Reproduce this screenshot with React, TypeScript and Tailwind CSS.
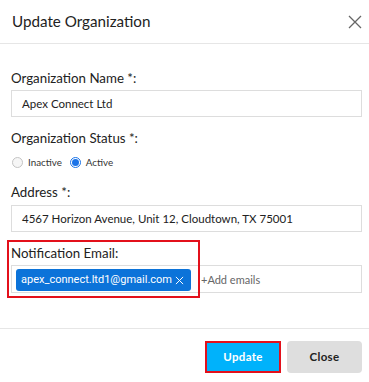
import React, { useState } from "react";

const lato = { fontFamily: "Lato, 'Open Sans', sans-serif" };

function Radio({ checked, label }: { checked: boolean; label: string }) {
  return (
    <label className="flex items-center gap-[5px] text-[9.8px] text-[#333]">
      {checked ? (
        <span className="w-[11px] h-[11px] rounded-full border border-[#1a73e8] bg-white flex items-center justify-center">
          <span className="w-[7px] h-[7px] rounded-full bg-[#1a73e8]" />
        </span>
      ) : (
        <span className="w-[11px] h-[11px] rounded-full border border-[#c4c4c4] bg-[#f6f6f6]" />
      )}
      {label}
    </label>
  );
}

export default function App() {
  const [status, setStatus] = useState("active");

  return (
    <div className="w-[369px] h-[382px] bg-white text-[#222] overflow-hidden" style={lato}>
      <div className="h-[44px] border-b border-[#e6e6e6] flex items-center justify-between pl-[12px] pr-[7px]">
        <h2 className="text-[15.2px] leading-none mt-[1px]">Update Organization</h2>
        <button className="w-[14px] h-[14px] text-[#666] mt-[1px]">
          <svg viewBox="0 0 14 14" width="14" height="14" stroke="currentColor" strokeWidth="1.3" fill="none">
            <path d="M1 1L13 13M13 1L1 13" />
          </svg>
        </button>
      </div>

      <div className="pl-[11px] pr-[7px] pt-[26px] flex flex-col">
        <div className="text-[13.3px] leading-[16px]">Organization Name *:</div>
        <div className="mt-[4px] h-[27px] border border-[#ddd] flex items-center pl-[10px] text-[11.5px]">
          Apex Connect Ltd
        </div>

        <div className="mt-[13px] text-[13.3px] leading-[16px]">Organization Status *:</div>
        <div className="mt-[8px] flex items-center gap-[8px] h-[16px] pl-[1px]" onClick={() => setStatus(status)}>
          <Radio checked={status === "inactive"} label="Inactive" />
          <Radio checked={status === "active"} label="Active" />
        </div>

        <div className="mt-[14px] text-[13.3px] leading-[16px]">Address *:</div>
        <div className="mt-[5px] h-[27px] border border-[#ddd] flex items-center pl-[10px] text-[11.5px]">
          4567 Horizon Avenue, Unit 12, Cloudtown, TX 75001
        </div>

        <div className="relative mt-[8px]">
          <div className="absolute left-[-4px] top-0 w-[193px] h-[58px] border-2 border-[#e3101b] pointer-events-none z-10" />
          <div className="pt-[5px] text-[13.3px] leading-[16px]">Notification Email:</div>
          <div className="mt-[4px] h-[28px] border border-[#ddd] flex items-start pt-[3px] pl-[4px] gap-[10px]">
            <span
              className="h-[22px] w-[175px] rounded-[3px] bg-[#0c73d9] text-white flex items-center justify-between pl-[5px] pr-[7px] text-[11px]"
              style={{ fontFamily: "Roboto, Arial, sans-serif" }}
            >
              apex_connect.ltd1@gmail.com
              <svg viewBox="0 0 10 10" width="9" height="9" stroke="white" strokeWidth="1.1" fill="none">
                <path d="M1 1L9 9M9 1L1 9" />
              </svg>
            </span>
            <span className="text-[11px] leading-[22px] text-[#666]">+Add emails</span>
          </div>
        </div>
      </div>

      <div className="mt-[35px] border-t border-[#e6e6e6] pt-[12px] pr-[7px] flex justify-end gap-[6px]">
        <button className="w-[76px] h-[32px] bg-[#00b2fb] border-2 border-[#e3101b] text-white text-[11.5px] font-bold tracking-[0.3px]">
          Update
        </button>
        <button className="w-[75px] h-[32px] bg-[#dedede] rounded-[4px] text-[#222] text-[11.5px] font-bold tracking-[0.3px]">
          Close
        </button>
      </div>
    </div>
  );
}
